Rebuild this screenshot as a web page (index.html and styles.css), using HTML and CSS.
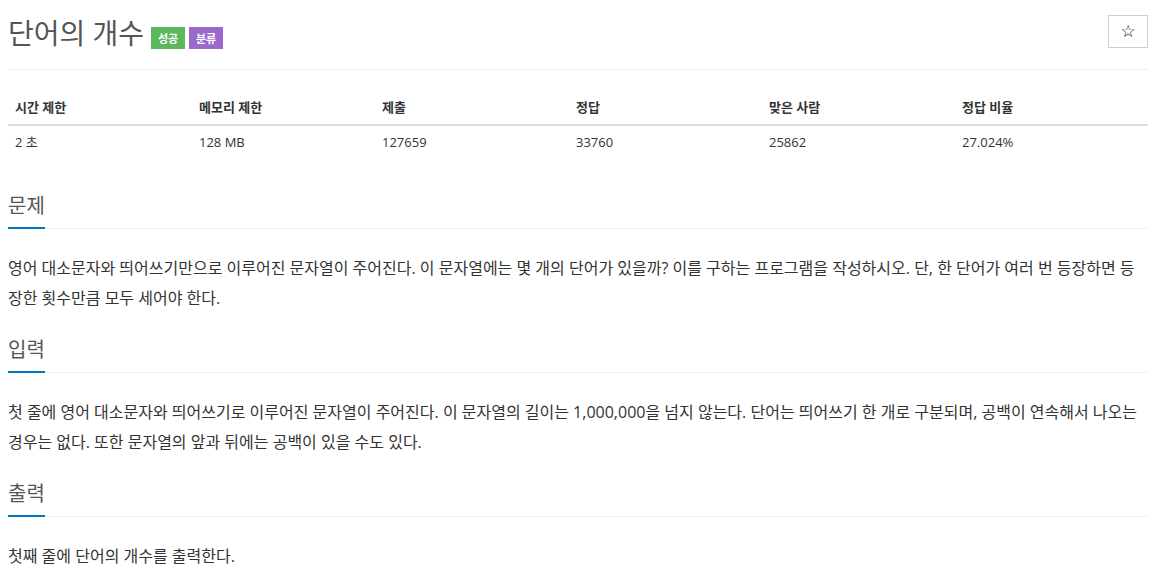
FILE: index.html
```
<!DOCTYPE html>
<html lang="ko">
<head>
<meta charset="utf-8">
<title>단어의 개수</title>
<link rel="stylesheet" href="styles.css">
</head>
<body>
<div class="page">
  <div class="page-header">
    <h1 class="title">
      <span class="title-text">단어의 개수</span>
      <span class="label label-ac">성공</span>
      <span class="label label-tag">분류</span>
    </h1>
    <button class="star-btn" type="button">☆</button>
  </div>

  <table class="info-table">
    <colgroup>
      <col class="c1"><col class="c2"><col class="c3"><col class="c4"><col class="c5"><col class="c6">
    </colgroup>
    <thead>
      <tr>
        <th>시간 제한</th>
        <th>메모리 제한</th>
        <th>제출</th>
        <th>정답</th>
        <th>맞은 사람</th>
        <th>정답 비율</th>
      </tr>
    </thead>
    <tbody>
      <tr>
        <td>2 초</td>
        <td>128 MB</td>
        <td>127659</td>
        <td>33760</td>
        <td>25862</td>
        <td>27.024%</td>
      </tr>
    </tbody>
  </table>

  <section class="section">
    <div class="headline"><h2>문제</h2></div>
    <p class="problem-text">영어 대소문자와 띄어쓰기만으로 이루어진 문자열이 주어진다. 이 문자열에는 몇 개의 단어가 있을까? 이를 구하는 프로그램을 작성하시오. 단, 한 단어가 여러 번 등장하면 등장한 횟수만큼 모두 세어야 한다.</p>
  </section>

  <section class="section">
    <div class="headline"><h2>입력</h2></div>
    <p class="problem-text">첫 줄에 영어 대소문자와 띄어쓰기로 이루어진 문자열이 주어진다. 이 문자열의 길이는 1,000,000을 넘지 않는다. 단어는 띄어쓰기 한 개로 구분되며, 공백이 연속해서 나오는 경우는 없다. 또한 문자열의 앞과 뒤에는 공백이 있을 수도 있다.</p>
  </section>

  <section class="section">
    <div class="headline"><h2>출력</h2></div>
    <p class="problem-text">첫째 줄에 단어의 개수를 출력한다.</p>
  </section>
</div>
</body>
</html>
```
FILE: styles.css
```
html, body {
  margin: 0;
  padding: 0;
  background: #fff;
}

body {
  font-family: "Open Sans", "Noto Sans CJK KR", sans-serif;
  color: #333;
  font-size: 14px;
}

.page {
  width: 1140px;
  margin: 0 8px;
}

.page-header {
  display: flex;
  justify-content: space-between;
  align-items: flex-start;
  padding: 15px 0 18px;
  border-bottom: 1px solid #eee;
}

.title {
  margin: 0;
  display: flex;
  align-items: flex-start;
  font-size: 28px;
  font-weight: 400;
  line-height: 36px;
  color: #555;
}

.title-text {
  margin-right: 7px;
}

.label {
  display: inline-flex;
  align-items: center;
  justify-content: center;
  width: 34px;
  height: 22px;
  padding: 0;
  margin-top: 12px;
  margin-right: 4px;
  font-size: 11px;
  font-weight: 700;
  line-height: 1;
  color: #fff;
}

.label-ac {
  background: #5cb85c;
}

.label-tag {
  background: #9b69cb;
}

.star-btn {
  width: 40px;
  height: 33px;
  padding: 0;
  border: 1px solid #ccc;
  border-radius: 0;
  background: #fff;
  color: #111;
  font-family: "DejaVu Sans", sans-serif;
  font-size: 17px;
  line-height: 1;
  cursor: pointer;
}

.info-table {
  width: 100%;
  margin-top: 21px;
  border-collapse: collapse;
  table-layout: fixed;
  font-size: 13px;
  line-height: 17px;
}

.c1 { width: 184px; }
.c2 { width: 183px; }
.c3 { width: 194px; }
.c4 { width: 193px; }
.c5 { width: 193px; }
.c6 { width: 193px; }

.info-table th,
.info-table td {
  padding: 8px 7px;
  text-align: left;
  vertical-align: top;
}

.info-table th {
  font-weight: 700;
  color: #333;
  border-bottom: 2px solid #ddd;
}

.info-table td {
  color: #333;
}

.section {
  margin-top: 26px;
}

.section:first-of-type {
  margin-top: 36px;
}

.headline {
  border-bottom: 1px dotted #e0e0e0;
}

.headline h2 {
  display: inline-block;
  margin: 0 0 -1px 0;
  padding-bottom: 10px;
  border-bottom: 2px solid #0076c0;
  font-size: 20px;
  font-weight: 400;
  line-height: 22px;
  color: #555;
}

.problem-text {
  margin: 24px 0 0;
  font-size: 16px;
  line-height: 30px;
  color: #333;
}
```
